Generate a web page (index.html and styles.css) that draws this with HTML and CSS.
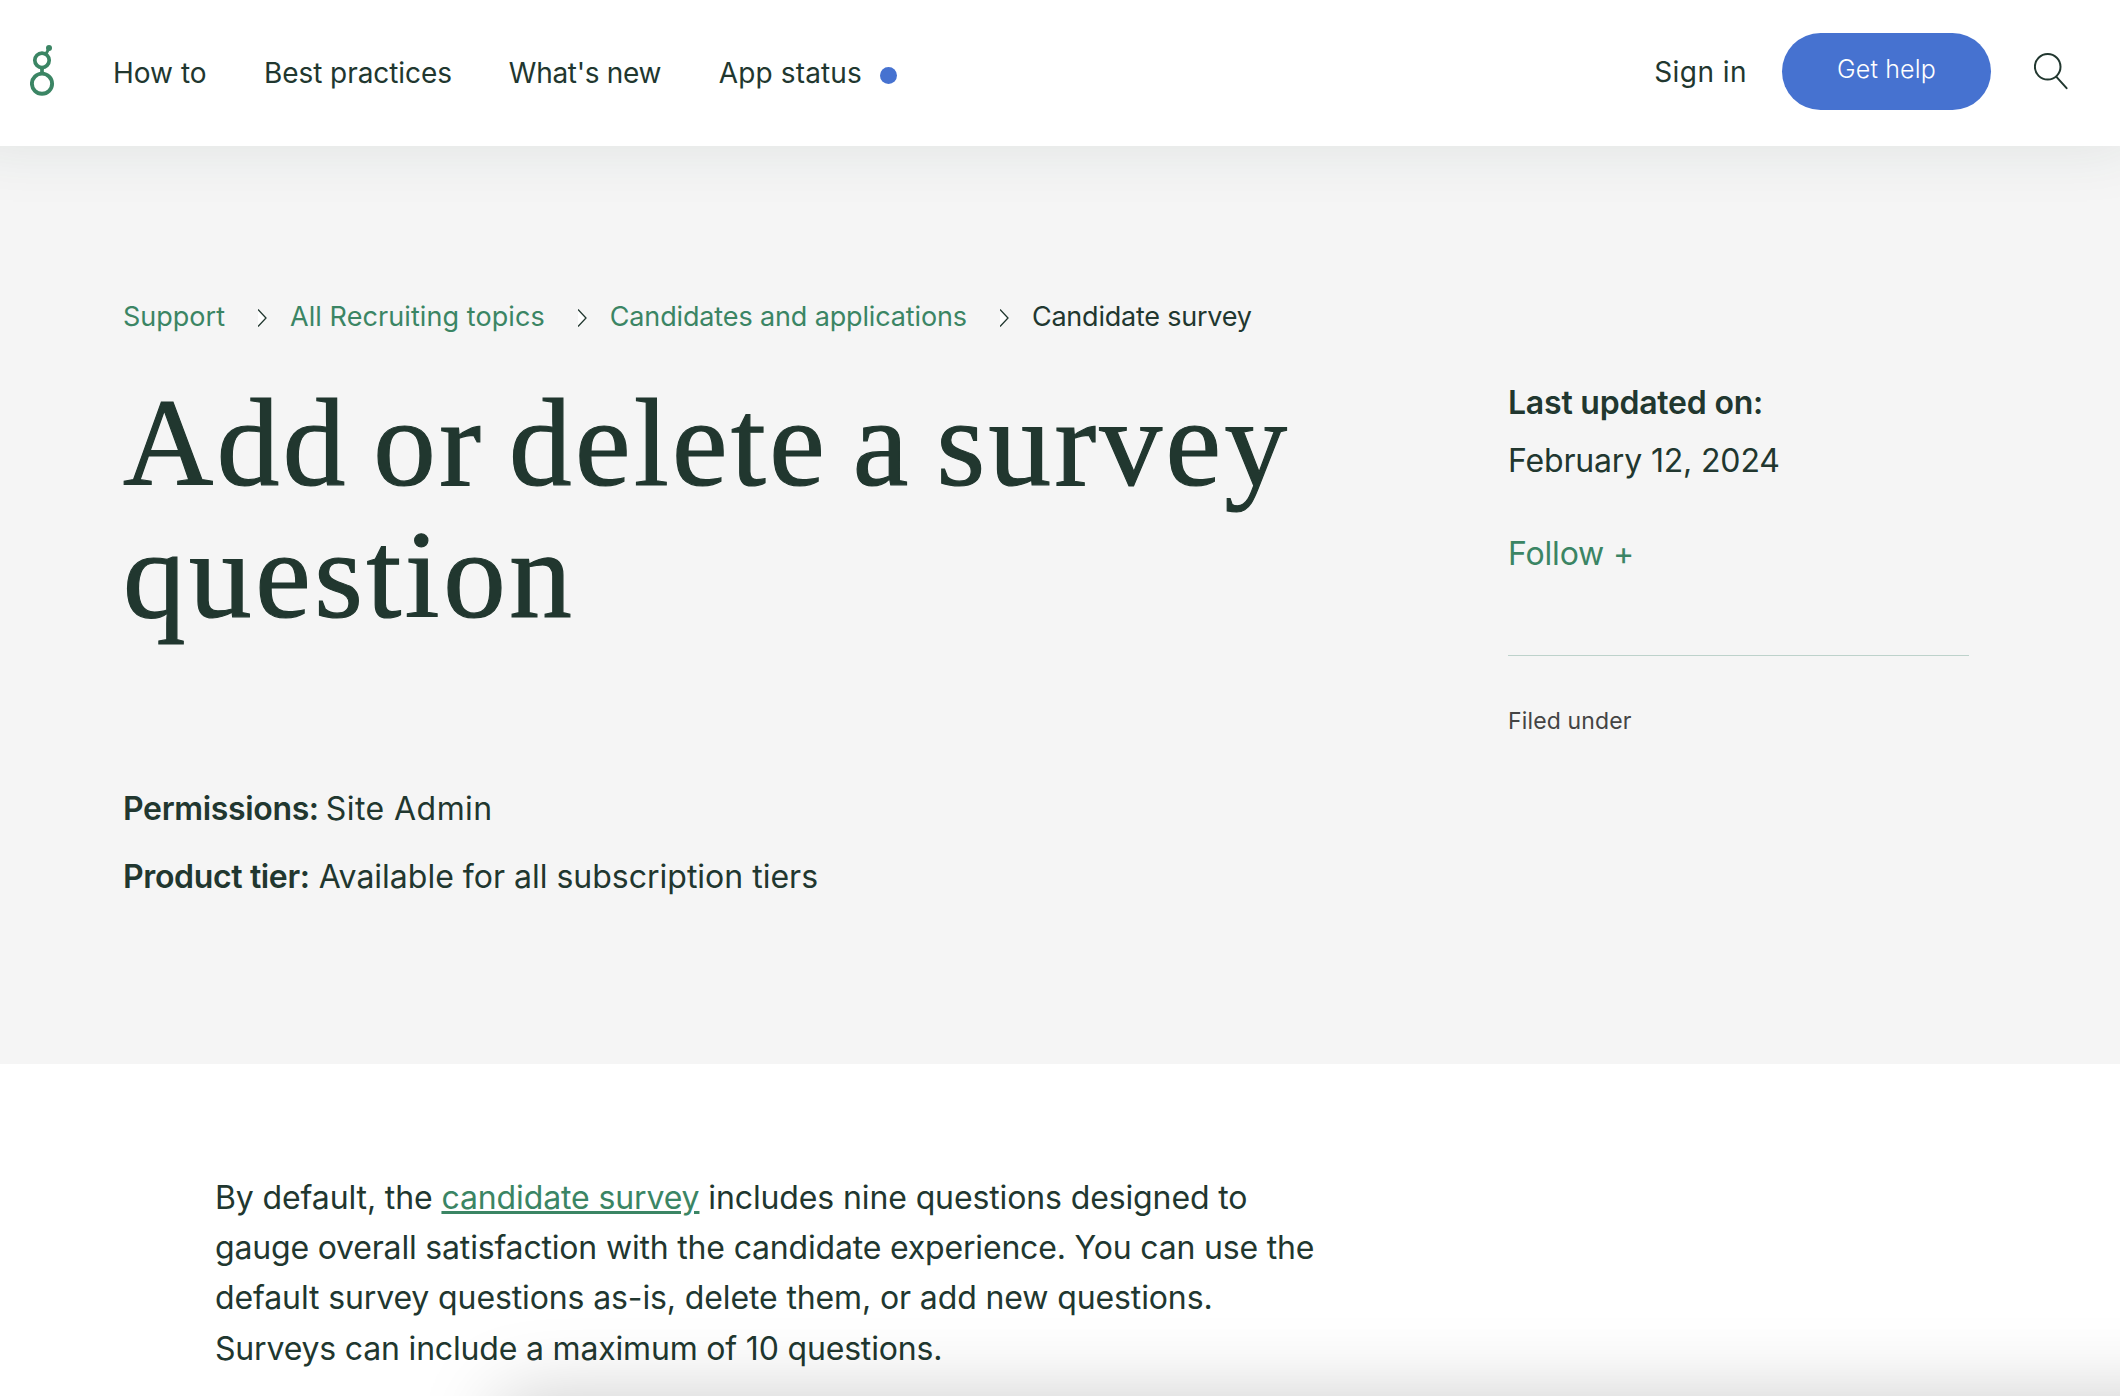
FILE: index.html
```
<!DOCTYPE html>
<html lang="en">
<head>
<meta charset="utf-8">
<title>Add or delete a survey question</title>
<link rel="stylesheet" href="styles.css">
</head>
<body>
<header class="site-header">
  <a class="logo" aria-label="Home">
    <svg width="26" height="52" viewBox="0 0 26 52" fill="none" stroke="#3b8564">
      <circle cx="12" cy="15.3" r="7.2" stroke-width="3.7"/>
      <circle cx="12" cy="38.7" r="10.1" stroke-width="3.9"/>
      <path d="M15.8 9.3 19 3.4" stroke-width="3"/>
      <circle cx="19" cy="3" r="3" fill="#3b8564" stroke="none"/>
      <path d="M9 22.5Q12 26 8 30H16Q12 26 15 22.5Z" fill="#3b8564" stroke="none"/>
    </svg>
  </a>
  <nav class="main-nav">
    <a>How to</a>
    <a class="practices">Best practices</a>
    <a class="news">What's new</a>
    <a class="status">App status<span class="status-dot"></span></a>
  </nav>
  <div class="actions">
    <a class="sign-in">Sign in</a>
    <a class="help-button">Get help</a>
    <svg class="search" width="36" height="38" viewBox="0 0 36 38" fill="none" stroke="#21372f" stroke-width="2" stroke-linecap="round">
      <circle cx="13.7" cy="13.8" r="12.8"/>
      <path d="M22.2 23.7 32.6 35.2"/>
    </svg>
  </div>
</header>
<section class="hero">
  <div class="hero-main">
    <nav class="breadcrumbs">
      <a>Support</a>
      <svg class="chevron" width="9" height="18" viewBox="0 0 9 18"><path d="M0 .5 8 9 0 17.5" fill="#fff" stroke="#21372f" stroke-width="1.3"/></svg>
      <a class="crumb-topics">All Recruiting topics</a>
      <svg class="chevron" width="9" height="18" viewBox="0 0 9 18"><path d="M0 .5 8 9 0 17.5" fill="#fff" stroke="#21372f" stroke-width="1.3"/></svg>
      <a class="crumb-section">Candidates and applications</a>
      <svg class="chevron" width="9" height="18" viewBox="0 0 9 18"><path d="M0 .5 8 9 0 17.5" fill="#fff" stroke="#21372f" stroke-width="1.3"/></svg>
      <span class="current">Candidate survey</span>
    </nav>
    <h1 class="title">Add or delete a survey <span class="title-end">question</span></h1>
    <p class="meta"><strong>Permissions:</strong> <span class="meta-role">Site Admin</span></p>
    <p class="meta"><strong>Product tier:</strong> Available for all subscription tiers</p>
  </div>
  <aside class="side">
    <div class="side-line"><strong>Last updated on:</strong></div>
    <div class="side-line">February 12, 2024</div>
    <a class="side-line follow">Follow +</a>
    <div class="filed">Filed under</div>
  </aside>
</section>
<main class="article">
  <p>By default, the <a class="link">candidate survey</a> includes nine questions designed to<br><span class="snug">gauge overall satisfaction with the candidate experience. You can use the</span><br>default survey questions as-is, delete them, or add new questions.<br><span class="snug">Surveys can include a maximum of 10 questions.</span></p>
</main>
<div class="banner"></div>
</body>
</html>
```
FILE: styles.css
```
* { box-sizing: border-box; }
body {
  margin: 0;
  height: 1396px;
  overflow: hidden;
  background: #fff;
  color: #21372f;
  font-family: Inter, "Liberation Sans", sans-serif;
  font-size: 32px;
}
p, h1 { margin: 0; }

.site-header {
  position: relative;
  z-index: 1;
  display: flex;
  align-items: center;
  height: 146px;
  padding: 0 50px 0 30px;
  background: #fff;
  box-shadow: -10px -25px 60px 25px rgba(33, 65, 55, .1);
  font-size: 28px;
}
.logo { display: flex; padding-bottom: 5px; }
.main-nav { display: flex; gap: 57.5px; margin-left: 57px; }
.practices { letter-spacing: -.08px; }
.news { margin-left: -.5px; letter-spacing: -.3px; }
.status { display: flex; align-items: center; letter-spacing: .15px; }
.status-dot { width: 17px; height: 17px; margin: 4px 0 0 18px; border-radius: 50%; background: #4672d0; }
.actions { display: flex; align-items: center; margin-left: auto; padding-bottom: 3px; }
.sign-in { letter-spacing: .45px; }
.help-button {
  width: 209px;
  height: 77px;
  margin: 0 43px 0 35px;
  border-radius: 39px;
  background: #4672d0;
  color: #fff;
  font-size: 25px;
  font-weight: 300;
  line-height: 72px;
  letter-spacing: .15px;
  text-align: center;
}

.hero {
  display: grid;
  grid-template-columns: 1385px 461px;
  height: 918px;
  padding: 154px 0 0 123px;
  background: #f5f5f5;
}
.breadcrumbs { display: flex; align-items: center; height: 32px; font-size: 27px; color: #3b8564; }
.chevron { margin: 3px 23px 0 33px; }
.crumb-topics { letter-spacing: .08px; }
.crumb-section { letter-spacing: -.14px; }
.current { color: #21372f; letter-spacing: -.22px; }
.title {
  width: 1200px;
  margin: 45px 0 148px;
  font: 400 125px/132px "Liberation Serif", serif;
  letter-spacing: 3.45px;
  word-spacing: -10px;
  -webkit-text-stroke: 1.2px #21372f;
}
.title-end { letter-spacing: 3.6px; }
.meta { margin-bottom: 28px; line-height: 40px; }
.meta-role { margin-left: -2px; letter-spacing: .45px; }
strong { font-weight: 600; letter-spacing: -.35px; }
.side { padding-top: 74px; }
.side-line { display: block; line-height: 58px; letter-spacing: -.16px; }
.side-line strong { letter-spacing: -.22px; }
.follow { margin-top: 35px; color: #3b8564; }
.filed {
  margin-top: 72px;
  padding-top: 50px;
  border-top: 1px solid #bdd2cb;
  color: #444;
  font-size: 23px;
  line-height: 30px;
  letter-spacing: .15px;
}

.article {
  padding: 108.6px 0 0 215px;
  line-height: 50.4px;
  letter-spacing: -.12px;
  white-space: nowrap;
}
.snug { letter-spacing: -.18px; }
.link {
  color: #3b8564;
  text-decoration: underline;
  text-decoration-thickness: 3px;
  text-underline-offset: 2px;
}
/* Bottom banner sits just below the fold; only its shadow reaches the page. */
.banner {
  position: fixed;
  top: 1398px;
  left: 500px;
  width: 1800px;
  height: 200px;
  box-shadow: 0 0 80px rgba(0, 0, 0, .21);
}
```
